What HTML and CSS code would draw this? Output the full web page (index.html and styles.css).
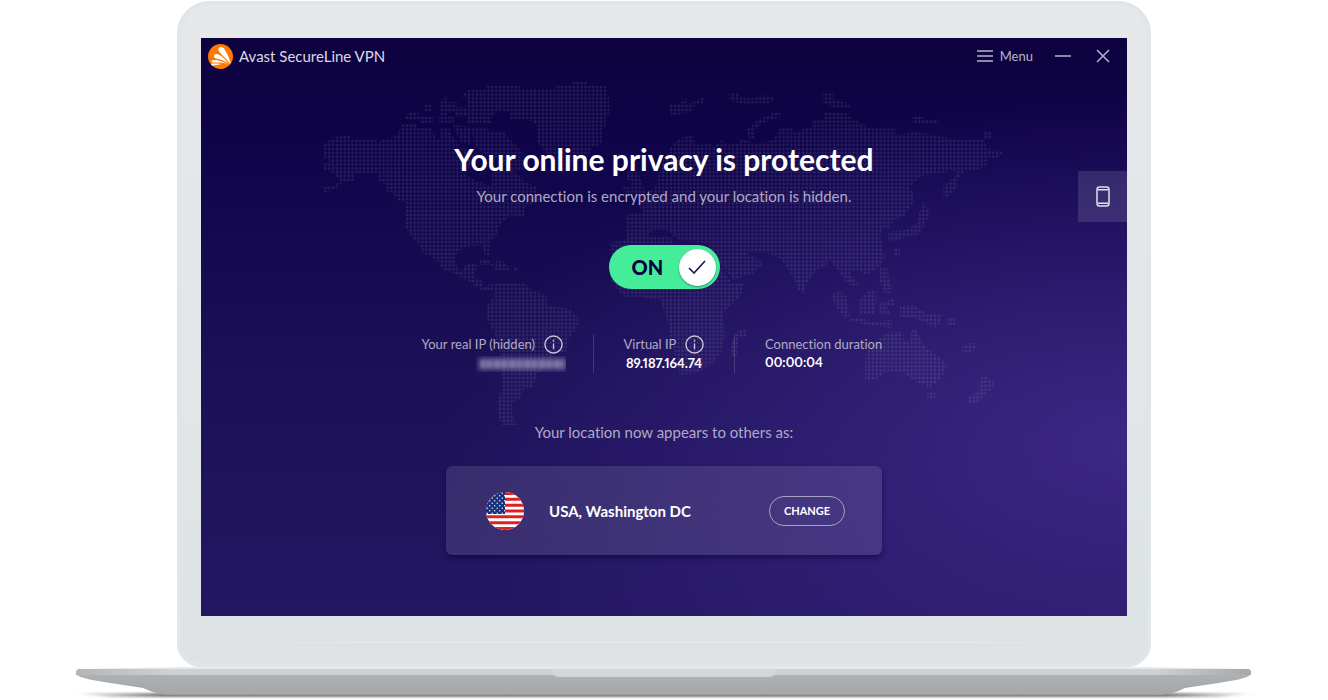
FILE: index.html
```
<!DOCTYPE html>
<html lang="en">
<head>
    <meta charset="UTF-8">
    <meta name="viewport" content="width=device-width, initial-scale=1.0">
    <title>Avast SecureLine VPN</title>
    <link rel="stylesheet" href="styles.css">
</head>
<body>

    <div class="laptop">
        <div class="lid">
            <main class="screen">
                <svg class="map" viewBox="0 0 2124 1101" aria-hidden="true">
                    <defs>
                        <pattern id="dots" x="40.2" y="196.2" width="11.65" height="11.65" patternUnits="userSpaceOnUse">
                            <circle cx="5.8" cy="5.8" r="4"/>
                        </pattern>
                    </defs>
                    <g fill="url(#dots)">
                        <!-- north america -->
                        <path d="M40 220L64 208 87 197 122 197 122 208 195 208 205 220 215 208 250 208 250 197 265 197 265 184 277 162 320 162 320 174 365 174 377 208 400 196 420 185 435 208 450 220 450 236 470 236 500 262 480 290 462 310 500 335 545 350 545 310 565 295 620 310 645 335 680 350 690 395 650 405 640 440 600 435 570 465 560 495 540 515 538 558 525 558 515 525 470 530 445 545 432 565 442 590 450 605 470 580 500 580 500 600 490 620 520 635 520 650 550 640 550 660 510 660 480 635 435 612 400 600 380 570 340 550 325 520 300 495 288 475 288 400 265 390 245 365 228 365 228 345 205 330 205 310 135 310 130 334 100 334 80 355 40 370 40 350 75 348 90 330 70 310 40 300 40 285 60 270 40 265z"/>
                        <path d="M285 150V138L300 127H325V140H370V160H330V148zM343 103H365V125H343zM390 105L400 80H412V95H440V110H470V82H450L470 60H530V47H632V58H740V47H785V36H830V47H890V70L898 85V130L886 140V165L875 180V220L845 235 830 270 790 275 760 310 730 290 710 250 680 215V165L655 148H600V128L575 120 545 138V160H470V140H435V125H410V138H390zM385 140H432V160H385zM390 175H420V198H390zM485 175H535V185H585V197L610 215 640 250V300L600 310 575 270 530 255 505 240 490 215zM430 165L480 170 480 225 450 215z"/>
                        <path d="M510 570H540V585H510zM505 568L540 575 560 590 530 582zM560 570L590 580 598 600 555 600zM610 592H622V604H610z"/>
                        <!-- south america -->
                        <path d="M555 640H645L665 660 710 675V705L780 718 805 740V765L780 800 768 845 735 850 705 890 680 915 670 950 640 960 630 985 605 1000 605 1030 620 1065 575 1065 563 1030V990L575 960 575 900 570 850 555 795 530 745 530 710 550 680z"/>
                        <!-- europe and asia -->
                        <path d="M948 435L1000 430 985 405 1000 380 1035 350 1050 300 1060 270 1090 220 1120 200 1150 197 1155 225 1200 222 1210 235 1230 210 1245 215 1250 225 1285 220 1290 208 1325 215 1330 225 1390 210 1410 175 1445 175 1455 185 1505 170 1505 150 1540 148 1545 128 1610 130 1625 145 1680 175 1757 175 1757 195 1820 185 1880 197 1950 210 2022 208 2030 235 2080 248 2060 265 2035 262 2030 285 2000 300 1970 300 1945 325 1940 355 1915 380 1900 380 1900 350 1945 310 1920 298 1900 310 1870 310 1830 322 1800 350 1810 370 1810 400 1780 440 1750 450 1735 480 1720 470 1710 500 1725 560 1710 590 1670 615 1640 600 1620 610 1645 640 1640 650 1610 640 1590 610 1560 570 1545 590 1520 600 1490 640 1480 670 1465 660 1450 620 1430 590 1410 565 1360 545 1310 550 1340 565 1360 580 1330 610 1270 630 1240 590 1200 560 1190 520 1110 510 1070 480 1030 480 1010 500 950 520z"/>
                        <path d="M935 350H965V330H950V305H985L1000 350 1010 385H960zM1075 105H1100L1130 85V105L1180 80V98L1150 110V125L1085 137zM1258 70H1285V85H1330L1350 75 1390 80V95L1340 105 1290 100 1260 90zM1308 180L1345 150 1390 128H1410V140L1360 158 1335 180V208H1318zM1538 70H1572V90L1620 100V112H1575L1538 100zM1807 140H1840V150H1885V162H1807zM2022 185H2046V208H2022z"/>
                        <path d="M1830 420L1840 395 1862 430 1840 470 1825 495 1790 500 1760 515 1735 512 1735 485 1790 480 1820 460zM1750 535H1770V555H1750zM1710 590H1735V615L1745 640V670H1725L1710 635z"/>
                        <!-- africa -->
                        <path d="M900 520L970 500 1080 500 1110 540 1200 550 1240 600 1265 640 1305 640 1290 680 1240 730 1245 800 1230 850 1210 880 1160 910 1110 915 1100 870 1080 800 1070 740 1050 690 990 680 940 680 900 630z"/>
                        <path d="M1285 780H1310V800H1285L1280 860H1262V820z"/>
                        <!-- oceania -->
                        <path d="M1562 675L1590 660 1610 680 1620 740 1600 740 1575 705zM1645 690L1680 660H1700V700L1690 735H1645zM1620 745H1665V755L1745 750V775L1680 765 1620 755zM1705 700L1755 685V705L1730 710 1745 735H1705zM1770 705H1810L1850 730H1895V745L1880 775 1850 760 1815 745 1770 740zM1910 745H1935V765H1910zM1957 830L1975 820H2000V835L1980 845H1957z"/>
                        <path d="M1668 845L1690 820 1735 785H1780V810L1800 820 1805 780H1820L1835 820 1870 850 1910 880V895L1890 930 1870 945H1840L1800 925 1780 905 1730 905 1690 930H1665V880zM1852 965H1875V985H1852zM2015 920H2030L2050 935V950L2025 975 2000 1000 1970 1000V980L2005 965zM1850 940H1865V950H1850z"/>
                    </g>
                </svg>

                <header class="titlebar">
                    <svg class="logo" viewBox="0 0 50 50" aria-hidden="true">
                        <circle cx="25" cy="25" r="25" fill="#ff7800"/>
                        <path d="M45 41C45 31 36 14 31 8c-5-4-12-1-10 5 3 7 16 15 24 28z" fill="#fff"/>
                        <path d="M42 40C35 30 25 22 18 20c-6-1-8 5-4 8 6 3 18 3 28 12z" fill="#fff"/>
                        <path d="M38 40C30 35 20 32 11 32c-5 1-5 5-1 5 8 0 18-1 28 3z" fill="#fff"/>
                        <path d="M27 40c-6-1-12-1-18-1-4 1-3 4 0 4 6 0 12-2 18-3z" fill="#fff"/>
                    </svg>
                    <span class="app-name">Avast SecureLine VPN</span>
                    <button class="menu" type="button">
                        <svg width="16" height="12" viewBox="0 0 16 12" aria-hidden="true"><path d="M0 1h16M0 6h16M0 11h16"/></svg>
                        Menu
                    </button>
                    <button class="window-btn" type="button" aria-label="Minimize">
                        <svg width="16" height="14" viewBox="0 0 16 14"><path d="M0 7h16"/></svg>
                    </button>
                    <button class="window-btn" type="button" aria-label="Close">
                        <svg width="14" height="14" viewBox="0 0 14 14"><path d="M1 1l12 12M13 1L1 13"/></svg>
                    </button>
                </header>

                <button class="device-tab" type="button" aria-label="Mobile devices">
                    <svg width="14" height="21" viewBox="0 0 14 21">
                        <rect x="1" y="1" width="12" height="19" rx="2.5"/>
                        <path d="M2 3.7h10M2 17.3h10"/>
                    </svg>
                </button>

                <h1>Your online privacy is protected</h1>
                <p class="subtitle">Your connection is encrypted and your location is hidden.</p>

                <label class="toggle">
                    <input type="checkbox" role="switch" checked>
                    <span class="toggle-text">ON</span>
                    <span class="knob">
                        <svg width="18" height="14" viewBox="0 0 18 14" aria-hidden="true"><path d="M1 8l5 5L17 1"/></svg>
                    </span>
                </label>

                <dl class="stats">
                    <div class="stat real-ip">
                        <dt>Your real IP (hidden)
                            <svg class="info" viewBox="0 0 20 20" aria-hidden="true"><circle cx="10" cy="10" r="9"/><path d="M10 5v2M10 9v6"/></svg>
                        </dt>
                        <dd><span class="blurred"></span></dd>
                    </div>
                    <div class="stat virtual-ip">
                        <dt>Virtual IP
                            <svg class="info" viewBox="0 0 20 20" aria-hidden="true"><circle cx="10" cy="10" r="9"/><path d="M10 5v2M10 9v6"/></svg>
                        </dt>
                        <dd>89.187.164.74</dd>
                    </div>
                    <div class="stat duration">
                        <dt>Connection duration</dt>
                        <dd>00:00:04</dd>
                    </div>
                </dl>

                <p class="appears">Your location now appears to others as:</p>

                <section class="location">
                    <svg class="flag" viewBox="0 0 38 38" aria-hidden="true">
                        <defs>
                            <clipPath id="round"><circle cx="19" cy="19" r="19"/></clipPath>
                            <pattern id="stars" width="5" height="5" patternUnits="userSpaceOnUse">
                                <circle cx="1.2" cy="1.2" r=".7" fill="#fff"/>
                                <circle cx="3.7" cy="3.7" r=".7" fill="#fff"/>
                            </pattern>
                        </defs>
                        <g clip-path="url(#round)">
                            <path fill="#fff" d="M0 0h38v38H0z"/>
                            <path stroke="#e02020" stroke-width="2.92" d="M0 1.5h38M0 7.3h38M0 13.2h38M0 19h38M0 24.8h38M0 30.7h38M0 36.5h38"/>
                            <path fill="#17307f" d="M0 0h19v22H0z"/>
                            <path fill="url(#stars)" d="M0 0h19v22H0z"/>
                        </g>
                    </svg>
                    <span class="place">USA, Washington DC</span>
                    <button class="change" type="button">CHANGE</button>
                </section>
            </main>
        </div>

        <svg class="base" viewBox="0 0 1328 34" preserveAspectRatio="none" aria-hidden="true">
            <defs>
                <linearGradient id="body" x2="0" y2="1">
                    <stop offset="0" stop-color="#aeb2b4"/>
                    <stop offset="1" stop-color="#a4a6a8"/>
                </linearGradient>
                <linearGradient id="edge">
                    <stop offset="0" stop-color="#b2b6b8"/>
                    <stop offset=".08" stop-color="#cdd1d3"/>
                    <stop offset=".92" stop-color="#cdd1d3"/>
                    <stop offset="1" stop-color="#a6a8aa"/>
                </linearGradient>
                <linearGradient id="shadow">
                    <stop offset="0" stop-color="#888" stop-opacity="0"/>
                    <stop offset=".08" stop-color="#777"/>
                    <stop offset=".92" stop-color="#777"/>
                    <stop offset="1" stop-color="#888" stop-opacity="0"/>
                </linearGradient>
                <filter id="soft" x="-5%" y="-100%" width="110%" height="300%"><feGaussianBlur stdDeviation="3 1"/></filter>
            </defs>
            <path d="M70 26H1258L1220 30H110z" fill="url(#shadow)" filter="url(#soft)"/>
            <path d="M76 6H1251C1251 11 1240 13 1185 21 1175 26 1166 28 1156 28H172C160 28 152 25 143 21 90 13 76 11 76 6z" fill="url(#body)"/>
            <path d="M78 2H1249L1251 4V8H76V4z" fill="url(#edge)"/>
            <path d="M76 2L184 0H1144L1251 2z" fill="#e5e9eb"/>
            <path d="M553 2H775V8C773 9 771 10 767 10H561C557 10 555 9 553 8z" fill="#d4d7d8"/>
            <path d="M170 28H1158" stroke="#8f9092" stroke-width="1"/>
        </svg>
    </div>

</body>
</html>
```
FILE: styles.css
```
* {
    box-sizing: border-box;
}

body {
    margin: 0;
    background-color: #fff;
    font-family: Lato, "Open Sans", sans-serif;
    font-variant-ligatures: none;
    color: #fff;
}

button {
    border: 0;
    padding: 0;
    background: none;
    font-family: inherit;
    color: inherit;
    cursor: pointer;
}

svg {
    display: block;
    fill: none;
}

.laptop {
    display: flex;
    flex-direction: column;
    overflow: hidden;
}

.lid {
    margin: 1px 177px 0;
    padding: 37px 24px 24px;
    border-radius: 33px 33px 24px 24px;
    background: linear-gradient(#e6e8ea, #e2e6e8 60%, #dde2e5 92%, #e0e2e4);
    box-shadow: inset 0 0 0 4px #e0e5e8;
}

.lid::after {
    content: "";
    display: block;
    height: 1px;
    margin: 26px 40px 0;
    background: linear-gradient(90deg, transparent, #e8ebed 15%, #e8ebed 85%, transparent);
}

.screen {
    position: relative;
    display: flex;
    flex-direction: column;
    align-items: center;
    padding-bottom: 61px;
    background:
        radial-gradient(ellipse 680px 350px at 100% 70%, rgba(70, 46, 148, 0.75), rgba(70, 46, 148, 0)),
        linear-gradient(#0d023e, #10044a 20%, #1b1056 55%, #241762);
}

.map {
    position: absolute;
    top: 32px;
    left: 0;
    right: 0;
    width: 708px;
    margin: 0 auto;
    opacity: 0.1;
}

.map circle {
    fill: #fff;
}

.titlebar {
    position: relative;
    align-self: stretch;
    display: flex;
    align-items: center;
    height: 36px;
    padding: 0 17px 0 7px;
}

.logo {
    width: 25px;
    height: 25px;
    margin-right: 6px;
}

.app-name {
    margin-right: auto;
    font-size: 15px;
    color: #dcd9e6;
}

.titlebar button {
    color: #b9b4cb;
}

.titlebar path {
    stroke: currentColor;
    stroke-width: 1.5;
}

.titlebar .logo path {
    stroke: none;
}

.menu {
    display: flex;
    align-items: center;
    gap: 7px;
    font-size: 13px;
}

.window-btn {
    margin-left: 22px;
}

.window-btn + .window-btn {
    margin-left: 25px;
}

.device-tab {
    position: absolute;
    top: 133px;
    right: 0;
    width: 49px;
    height: 51px;
    background-color: rgba(255, 255, 255, 0.12);
}

.device-tab svg {
    margin: 0 auto;
    stroke: #e4e0ee;
    stroke-width: 1.5;
}

h1 {
    position: relative;
    margin: 67px 0 9px;
    font-size: 30px;
    line-height: 36px;
}

.subtitle,
.appears {
    position: relative;
    margin: 0;
    font-size: 15px;
    line-height: 20px;
    color: #aeaac3;
}

.toggle {
    position: relative;
    display: flex;
    align-items: center;
    justify-content: space-between;
    width: 111px;
    height: 44px;
    margin: 39px 0 45px;
    padding: 0 4px 0 23px;
    border-radius: 22px;
    background-color: #45ed9b;
    color: #0d0240;
    cursor: pointer;
}

.toggle input {
    position: absolute;
    opacity: 0;
}

.toggle-text {
    font-size: 20px;
    font-weight: 900;
    line-height: 24px;
}

.knob {
    display: flex;
    align-items: center;
    justify-content: center;
    width: 37px;
    height: 37px;
    border-radius: 50%;
    background-color: #fff;
    box-shadow: 0 1px 2px rgba(13, 2, 64, 0.4);
}

.knob svg {
    stroke: #1b0f55;
    stroke-width: 1.6;
}

.stats {
    position: relative;
    align-self: stretch;
    display: grid;
    grid-template-columns: 1fr 142px 1fr;
    margin: 0;
}

.stat {
    padding: 0 30px;
}

.stat dt {
    display: flex;
    align-items: center;
    gap: 9px;
    height: 20px;
    font-size: 13px;
    white-space: nowrap;
    color: #b0acc5;
}

.stat dd {
    margin: 0;
    font-size: 13px;
    font-weight: 700;
    font-variant-numeric: proportional-nums;
    line-height: 19px;
}

.real-ip {
    display: flex;
    flex-direction: column;
    align-items: flex-end;
}

.virtual-ip {
    display: flex;
    flex-direction: column;
    align-items: center;
    padding: 0;
    border: solid rgba(255, 255, 255, 0.15);
    border-width: 0 1px;
}

.duration dd {
    line-height: 17px;
}

.info {
    width: 19px;
    height: 19px;
    stroke: #c9c5d8;
    stroke-width: 1.5;
}

.real-ip dd {
    width: 90px;
    height: 16px;
    margin: 2px -3px 0 0;
    padding: 3px 1px 3px 4px;
    overflow: hidden;
    background-color: rgba(255, 255, 255, 0.05);
}

.blurred {
    display: block;
    height: 10px;
    background: repeating-linear-gradient(90deg, #8f87b4 0 4px, #62588f 4px 7px, #857caa 7px 12px, #5a508a 12px 15px);
    filter: blur(2px);
}

.appears {
    margin: 49px 0 24px;
}

.location {
    position: relative;
    display: flex;
    align-items: center;
    width: 436px;
    height: 89px;
    padding: 0 37px 0 40px;
    border-radius: 6px;
    background-color: rgba(255, 255, 255, 0.11);
    box-shadow: 0 3px 5px rgba(10, 2, 50, 0.5);
}

.flag {
    width: 38px;
    height: 38px;
    margin-right: 25px;
}

.place {
    margin-right: auto;
    font-size: 15px;
    font-weight: 700;
}

.change {
    width: 76px;
    height: 30px;
    border: 1px solid #aaa3c4;
    border-radius: 15px;
    font-size: 11px;
    font-weight: 700;
}

.base {
    position: relative;
    width: 100%;
    height: 34px;
}
```
